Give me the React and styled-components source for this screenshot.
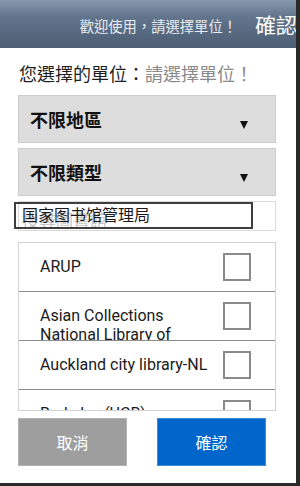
import React from 'react';
import styled, { createGlobalStyle } from 'styled-components';

const Global = createGlobalStyle`
  html, body {
    margin: 0;
    padding: 0;
    background: #2a2a2a;
  }
  * { box-sizing: border-box; }
`;

const FONT = `Roboto, "Noto Sans CJK TC", sans-serif`;

const Screen = styled.div`
  width: 296px;
  height: 483px;
  background: #ffffff;
  display: flex;
  flex-direction: column;
  overflow: hidden;
  font-family: ${FONT};
`;

const Header = styled.div`
  height: 48px;
  flex-shrink: 0;
  display: flex;
  align-items: center;
  justify-content: flex-end;
  background: linear-gradient(#8698ae 0%, #62758c 35%, #4c5e74 100%);
  white-space: nowrap;
`;

const HeaderTitle = styled.span`
  font-size: 14.3px;
  color: #e8ebef;
  margin-right: 18px;
  margin-top: 2px;
`;

const HeaderConfirm = styled.span`
  font-size: 21px;
  color: #ffffff;
  margin-right: -1px;
`;

const Body = styled.div`
  flex: 1;
  display: flex;
  flex-direction: column;
  padding: 15px 20px 0 18px;
`;

const Selected = styled.div`
  font-size: 18px;
  line-height: 24px;
  color: #1e1e1e;
  margin-left: 1px;
  white-space: nowrap;
`;

const Hint = styled.span`
  color: #8a8a8a;
`;

const Dropdown = styled.div`
  height: 48px;
  margin-top: ${p => p.$first ? 8 : 5}px;
  background: #dddddd;
  border: 1px solid #cdcdcd;
  display: flex;
  align-items: flex-start;
  justify-content: space-between;
  padding: 0 27px 0 11px;
`;

const DropLabel = styled.span`
  font-size: 18px;
  font-weight: bold;
  color: #111;
  line-height: 24px;
  margin-top: 13px;
`;

const Arrow = styled.span`
  width: 0;
  height: 0;
  margin-top: 25px;
  border-left: 4.5px solid transparent;
  border-right: 4.5px solid transparent;
  border-top: 8px solid #111;
`;

const SearchField = styled.div`
  position: relative;
  height: 30px;
  margin-top: 5px;
  border: 1px solid #dadada;
`;

const Placeholder = styled.span`
  display: block;
  font-size: 17px;
  line-height: 20px;
  color: #c4c4c4;
  padding: 9px 0 0 3px;
  white-space: nowrap;
  overflow: hidden;
  height: 28px;
`;

const Typed = styled.div`
  position: absolute;
  left: -5px;
  top: 0px;
  width: 239px;
  height: 27px;
  border: 2px solid #3e3e3e;
  background: transparent;
  font-size: 16px;
  line-height: 23px;
  color: #1a1a1a;
  padding-left: 6px;
  white-space: nowrap;
`;

const List = styled.div`
  margin-top: 11px;
  height: 169px;
  border: 1px solid #d2d2d2;
  overflow: hidden;
`;

const Row = styled.div`
  height: 49px;
  flex-shrink: 0;
  display: flex;
  align-items: flex-start;
  padding: 0 24px 0 21px;
  border-bottom: 1px solid #8c8c8c;
  overflow: hidden;
`;

const RowText = styled.div`
  flex: 1;
  font-size: 16px;
  line-height: 19px;
  color: #1a1a1a;
  padding-top: 14px;
  height: 48px;
  overflow: hidden;
`;

const Check = styled.span`
  width: 28px;
  height: 28px;
  margin-left: 8px;
  align-self: center;
  border: 2px solid #8a8a8a;
  background: #fff;
  flex-shrink: 0;
`;

const Buttons = styled.div`
  display: flex;
  gap: 30px;
  margin-top: 7px;
`;

const Button = styled.div`
  width: 109px;
  height: 48px;
  display: flex;
  align-items: center;
  justify-content: center;
  font-size: 16px;
  color: #ffffff;
  background: ${p => p.$primary ? '#0066cc' : '#9e9e9e'};
  border: 1px solid ${p => p.$primary ? '#3d8ad6' : '#b2b2b2'};
`;

const libraries = [
  'ARUP',
  'Asian Collections National Library of Australia',
  'Auckland city library-NL',
  'Berkeley (UCB)',
];

export default function App() {
  return (
    <>
      <Global />
      <Screen>
        <Header>
          <HeaderTitle>歡迎使用，請選擇單位！</HeaderTitle>
          <HeaderConfirm>確認</HeaderConfirm>
        </Header>
        <Body>
          <Selected>
            您選擇的單位：<Hint>請選擇單位！</Hint>
          </Selected>
          <Dropdown $first>
            <DropLabel>不限地區</DropLabel>
            <Arrow />
          </Dropdown>
          <Dropdown>
            <DropLabel>不限類型</DropLabel>
            <Arrow />
          </Dropdown>
          <SearchField>
            <Placeholder>搜尋圖書館</Placeholder>
            <Typed>国家图书馆管理局</Typed>
          </SearchField>
          <List>
            {libraries.map(name => (
              <Row key={name}>
                <RowText>{name}</RowText>
                <Check />
              </Row>
            ))}
          </List>
          <Buttons>
            <Button>取消</Button>
            <Button $primary>確認</Button>
          </Buttons>
        </Body>
      </Screen>
    </>
  );
}
